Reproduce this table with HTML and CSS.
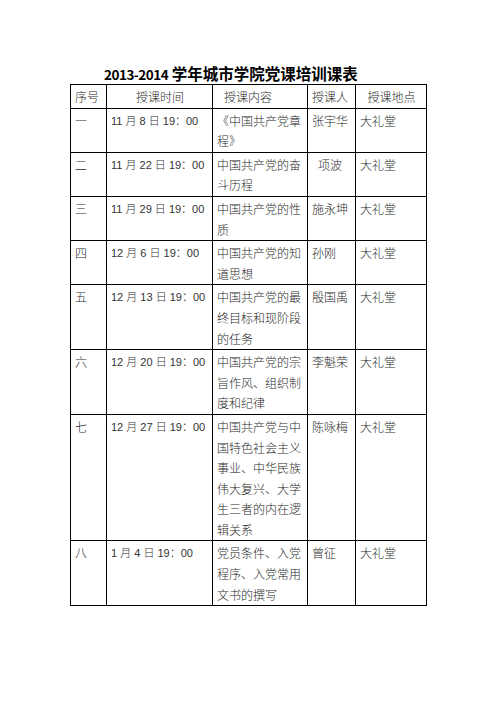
FILE: index.html
```html
<!DOCTYPE html>
<html lang="zh-CN">
<head>
<meta charset="utf-8">
<title>2013-2014学年城市学院党课培训课表</title>
<link rel="stylesheet" href="styles.css">
</head>
<body>
<div class="page">
  <h1 class="title"><span class="num">2013-2014</span> 学年城市学院党课培训课表</h1>
  <table class="sched">
    <colgroup>
      <col class="c-no">
      <col class="c-time">
      <col class="c-topic">
      <col class="c-who">
      <col class="c-where">
    </colgroup>
    <thead>
      <tr>
        <th class="left">序号</th>
        <th class="center">授课时间</th>
        <th class="left"><span class="ind">授课内容</span></th>
        <th class="left">授课人</th>
        <th class="center">授课地点</th>
      </tr>
    </thead>
    <tbody>
      <tr><td>一</td><td class="time">11 月 8 日 19：00</td><td>《中国共产党章<br>程》</td><td>张宇华</td><td>大礼堂</td></tr>
      <tr><td>二</td><td class="time">11 月 22 日 19：00</td><td>中国共产党的奋<br>斗历程</td><td><span class="ind2">项波</span></td><td>大礼堂</td></tr>
      <tr><td>三</td><td class="time">11 月 29 日 19：00</td><td>中国共产党的性<br>质</td><td>施永坤</td><td>大礼堂</td></tr>
      <tr><td>四</td><td class="time">12 月 6 日 19：00</td><td>中国共产党的知<br>道思想</td><td>孙刚</td><td>大礼堂</td></tr>
      <tr><td>五</td><td class="time">12 月 13 日 19：00</td><td>中国共产党的最<br>终目标和现阶段<br>的任务</td><td>殷国禹</td><td>大礼堂</td></tr>
      <tr><td>六</td><td class="time">12 月 20 日 19：00</td><td>中国共产党的宗<br>旨作风、组织制<br>度和纪律</td><td>李魁荣</td><td>大礼堂</td></tr>
      <tr><td>七</td><td class="time">12 月 27 日 19：00</td><td>中国共产党与中<br>国特色社会主义<br>事业、中华民族<br>伟大复兴、大学<br>生三者的内在逻<br>辑关系</td><td>陈咏梅</td><td>大礼堂</td></tr>
      <tr><td>八</td><td class="time">1 月 4 日 19：00</td><td>党员条件、入党<br>程序、入党常用<br>文书的撰写</td><td>曾征</td><td>大礼堂</td></tr>
    </tbody>
  </table>
</div>
</body>
</html>
```

FILE: styles.css
```css
html, body {
  margin: 0;
  padding: 0;
  background: #ffffff;
}

.page {
  padding: 63px 0 0 70px;
  font-family: "Noto Sans CJK SC", "Noto Sans", sans-serif;
  color: #2a2a2a;
}

.title {
  margin: 0 0 0 34px;
  font-size: 15.5px;
  line-height: 20px;
  font-weight: 700;
  color: #000000;
  white-space: nowrap;
}

.title .num {
  font-size: 13.5px;
  font-family: "Noto Sans CJK SC", sans-serif;
  letter-spacing: -0.5px;
}

.sched {
  border-collapse: collapse;
  table-layout: fixed;
  width: 356px;
  font-size: 12px;
  font-weight: 300;
}

.c-no { width: 36px; }
.c-time { width: 106px; }
.c-topic { width: 95px; }
.c-who { width: 48px; }
.c-where { width: 71px; }

.sched th,
.sched td {
  border: 1px solid #000000;
  padding: 2px 3px 0 4px;
  line-height: 20.6px;
  vertical-align: top;
  text-align: left;
  font-weight: 300;
  white-space: nowrap;
}

.sched th.center {
  text-align: center;
}

.sched .ind {
  padding-left: 7px;
}

.sched .ind2 {
  padding-left: 6px;
}

.sched td.time {
  font-size: 11px;
  font-family: "Liberation Sans", "Noto Sans CJK SC", sans-serif;
  font-weight: 300;
  color: #333333;
}
```
